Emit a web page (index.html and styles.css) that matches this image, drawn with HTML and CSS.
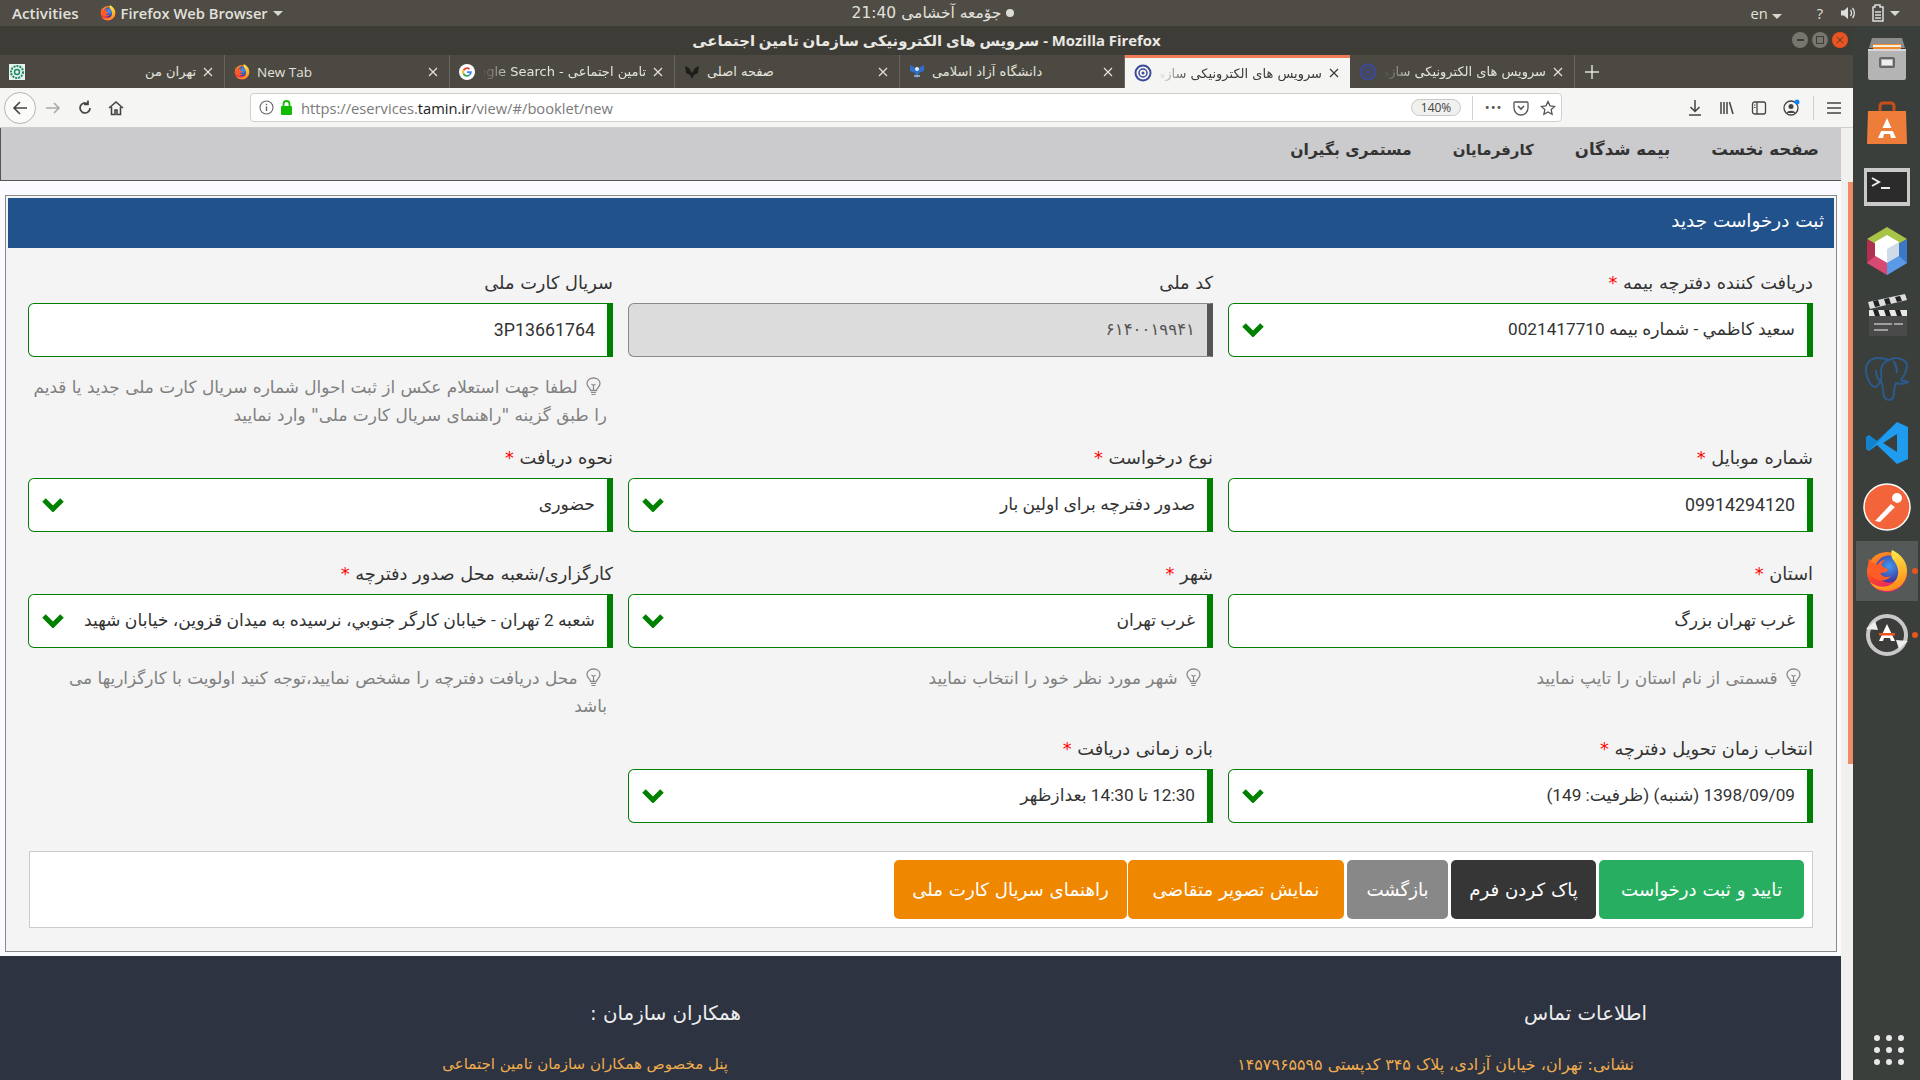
FILE: index.html
```html
<!DOCTYPE html>
<html lang="fa">
<head>
    <meta charset="UTF-8">
    <title>سرویس های الکترونیکی سازمان تامین اجتماعی</title>
    <link rel="stylesheet" href="styles.css">
</head>
<body>

    <svg class="defs" width="0" height="0">
        <defs>
            <linearGradient id="foxOuter" x1="0.2" y1="0" x2="0.7" y2="1">
                <stop offset="0" stop-color="#ff9a1f"/>
                <stop offset="0.55" stop-color="#f5402c"/>
                <stop offset="1" stop-color="#e31587"/>
            </linearGradient>
            <linearGradient id="foxFlame" x1="0.3" y1="0" x2="0.6" y2="1">
                <stop offset="0" stop-color="#fff44f"/>
                <stop offset="1" stop-color="#ff8a16"/>
            </linearGradient>
            <radialGradient id="foxGlobe" cx="0.5" cy="0.4" r="0.6">
                <stop offset="0" stop-color="#3f9bf0"/>
                <stop offset="1" stop-color="#40339a"/>
            </radialGradient>
            <symbol id="firefox" viewBox="0 0 44 44">
                <circle cx="22" cy="23" r="20" fill="url(#foxOuter)"/>
                <circle cx="24" cy="20" r="13.5" fill="url(#foxGlobe)"/>
                <path d="M27 1c9 4 16 12 15 23-1 11-10 18-20 18C14 42 8 38 5 33c6 5 14 6 20 3 6-3 9-9 8-15-1-6-4-9-6-12-1-3-1-6 0-8z" fill="url(#foxFlame)"/>
                <path d="M4 9c2 5 5 6 8 7 2-3 5-5 8-5-3 3-4 4-3 6 2 2 5 2 6 4-2 3-6 3-8 3 2 4 7 5 11 3-3 5-12 6-17 2C4 26 2 17 4 9z" fill="#ff5c27"/>
            </symbol>
            <symbol id="close" viewBox="0 0 10 10">
                <path d="M1 1l8 8M9 1l-8 8" fill="none" stroke="currentColor" stroke-width="1.2"/>
            </symbol>
            <symbol id="chevron" viewBox="0 0 24 16">
                <path d="M3 4l9 9 9-9" fill="none" stroke="#008000" stroke-width="5"/>
            </symbol>
            <symbol id="bulb" viewBox="0 0 15 20">
                <path d="M4.6 13.5C4.4 11 1 9.800 1 6.500 1 3 4 1 7.500 1S14 3 14 6.500c0 3.300-3.400 4.500-3.600 7z" fill="none" stroke="#8a8a8a" stroke-width="1.300"/>
                <path d="M7.500 13V8M5.500 7l2 1.500 2-1.500M5 15.500h5M5.500 17.500h4" fill="none" stroke="#8a8a8a" stroke-width="1.200"/>
            </symbol>
            <symbol id="tamin" viewBox="0 0 18 18">
                <circle cx="9" cy="9" r="7.500" fill="none" stroke="#3c4a9c" stroke-width="2"/>
                <circle cx="9" cy="9" r="4" fill="none" stroke="#3c4a9c" stroke-width="1.500"/>
                <circle cx="9" cy="9" r="1.500" fill="#3c4a9c"/>
            </symbol>
        </defs>
    </svg>

    <!-- gnome top bar -->
    <header class="topbar">
        <div class="topbar-left">
            <span class="activities">Activities</span>
            <span class="app-menu">
                <svg class="fav" width="16" height="16"><use href="#firefox"/></svg>
                Firefox Web Browser
                <i class="caret"></i>
            </span>
        </div>
        <div class="clock"><span dir="rtl">جۆمعه آخشامی 21:40</span> <i class="dot"></i></div>
        <div class="tray">
            <span class="lang">en <i class="caret"></i></span>
            <span class="help">?</span>
            <svg width="16" height="16" viewBox="0 0 16 16"><path d="M1 5.500h3L8 2v12l-4-3.500H1z" fill="#ddd"/><path d="M10.500 5c1.300 1.800 1.300 4.200 0 6M12.500 3c2.300 3 2.300 7 0 10" fill="none" stroke="#ddd" stroke-width="1.300"/></svg>
            <svg class="battery" width="14" height="18" viewBox="0 0 14 18"><path d="M4 1h5v2h3v14H2V3h2z" fill="none" stroke="#ddd" stroke-width="1.500"/><path d="M4 8h6M4 11h6M4 14h6" stroke="#ddd" stroke-width="1.500"/></svg>
            <i class="caret tray-caret"></i>
        </div>
    </header>

    <div class="desktop">
        <div class="window">
            <div class="titlebar">
                <span class="win-title"><span dir="rtl">سرویس های الکترونیکی سازمان تامین اجتماعی</span> - Mozilla Firefox</span>
                <div class="win-btns">
                    <span class="win-btn"><i class="min"></i></span>
                    <span class="win-btn"><i class="max"></i></span>
                    <span class="win-btn win-close"><svg width="8" height="8"><use href="#close"/></svg></span>
                </div>
            </div>

            <div class="tabstrip">
                <div class="tab">
                    <svg class="fav" width="16" height="16" viewBox="0 0 16 16"><rect width="16" height="16" fill="#e8f2ec"/><circle cx="8" cy="8" r="6" fill="none" stroke="#1c8a6a" stroke-width="2" stroke-dasharray="2 1"/><circle cx="8" cy="8" r="2.500" fill="none" stroke="#1c8a6a" stroke-width="1.500"/></svg>
                    <span class="tab-title" dir="rtl">تهران من</span>
                    <svg class="tab-x" width="10" height="10"><use href="#close"/></svg>
                </div>
                <div class="tab">
                    <svg class="fav" width="16" height="16"><use href="#firefox"/></svg>
                    <span class="tab-title tab-ltr">New Tab</span>
                    <svg class="tab-x" width="10" height="10"><use href="#close"/></svg>
                </div>
                <div class="tab">
                    <svg class="fav" width="16" height="16" viewBox="0 0 16 16"><circle cx="8" cy="8" r="8" fill="#fff"/><path d="M8 3.200a4.800 4.800 0 0 1 3.200 1.200l-1.300 1.300A3 3 0 0 0 5.200 7L3.700 5.800A4.800 4.800 0 0 1 8 3.200z" fill="#ea4335"/><path d="M3.700 5.800L5.200 7a3 3 0 0 0 0 2l-1.500 1.200a4.800 4.800 0 0 1 0-4.400z" fill="#fbbc05"/><path d="M3.700 10.200L5.200 9a3 3 0 0 0 4.500 1.500l1.400 1.100A4.800 4.800 0 0 1 3.700 10.200z" fill="#34a853"/><path d="M12.800 8c0 1.500-.6 2.700-1.700 3.600L9.700 10.500c.5-.3.900-.8 1-1.500H8V7.200h4.700c.1.300.1.500.1.800z" fill="#4285f4"/></svg>
                    <span class="tab-title tab-fade" dir="rtl">تامین اجتماعی - Google Search</span>
                    <svg class="tab-x" width="10" height="10"><use href="#close"/></svg>
                </div>
                <div class="tab">
                    <svg class="fav" width="16" height="16" viewBox="0 0 16 16"><path d="M8 15L6 11 2 9 1 2l4 2 3 5 3-5 4-2-1 7-4 2z" fill="#1e1e1c"/></svg>
                    <span class="tab-title tab-start"><span dir="rtl">صفحه اصلی</span></span>
                    <svg class="tab-x" width="10" height="10"><use href="#close"/></svg>
                </div>
                <div class="tab">
                    <svg class="fav" width="16" height="16" viewBox="0 0 16 16"><path d="M8 15L6 9 1 7 1 1l4 2 3 4 3-4 4-2 0 6-5 2z" fill="#2f6fc8"/><circle cx="8" cy="5" r="2" fill="#e4eefb"/><path d="M5 12h6" stroke="#e4eefb"/></svg>
                    <span class="tab-title tab-start"><span dir="rtl">دانشگاه آزاد اسلامی</span></span>
                    <svg class="tab-x" width="10" height="10"><use href="#close"/></svg>
                </div>
                <div class="tab tab-active">
                    <svg class="fav" width="18" height="18"><use href="#tamin"/></svg>
                    <span class="tab-title tab-fade" dir="rtl">سرویس های الکترونیکی سازمان تامین اجتماعی</span>
                    <svg class="tab-x" width="10" height="10"><use href="#close"/></svg>
                </div>
                <div class="tab">
                    <svg class="fav" width="18" height="18"><use href="#tamin"/></svg>
                    <span class="tab-title tab-fade" dir="rtl">سرویس های الکترونیکی سازمان تامین اجتماعی</span>
                    <svg class="tab-x" width="10" height="10"><use href="#close"/></svg>
                </div>
                <svg class="tab-new" width="16" height="16" viewBox="0 0 16 16"><path d="M8 1v14M1 8h14" stroke="#ddd" stroke-width="1.500"/></svg>
            </div>

            <div class="toolbar">
                <span class="back-btn"><svg width="16" height="16" viewBox="0 0 16 16"><path d="M15 8H2M8 2L2 8l6 6" fill="none" stroke="#444" stroke-width="1.600"/></svg></span>
                <svg class="tool-ico tool-fwd" width="16" height="16" viewBox="0 0 16 16"><path d="M1 8h13M9 3l5 5-5 5" fill="none" stroke="#aaa" stroke-width="1.600"/></svg>
                <svg class="tool-ico" width="16" height="16" viewBox="0 0 16 16"><path d="M13 8a5 5 0 1 1-2-4M11 0.500V4.500H7" fill="none" stroke="#444" stroke-width="1.700"/></svg>
                <svg class="tool-ico" width="16" height="16" viewBox="0 0 16 16"><path d="M1 8l7-6 7 6M3.500 7v7.500h3.500V10h2v4.500h3.500V7" fill="none" stroke="#444" stroke-width="1.600"/></svg>
                <div class="urlbar">
                    <svg width="15" height="15" viewBox="0 0 15 15"><circle cx="7.500" cy="7.500" r="6.500" fill="none" stroke="#666" stroke-width="1.100"/><path d="M7.500 6.500v4.500M7.500 3.800v1.500" stroke="#666" stroke-width="1.400"/></svg>
                    <svg class="lock" width="13" height="15" viewBox="0 0 13 15"><rect x="1" y="6" width="11" height="9" rx="1" fill="#12bc00"/><path d="M3.500 6V4a3 3 0 0 1 6 0v2" fill="none" stroke="#12bc00" stroke-width="1.800"/></svg>
                    <span class="url">https://eservices.<b>tamin.ir</b>/view/#/booklet/new</span>
                    <div class="url-tail">
                        <span class="zoom-pill">140%</span>
                        <i class="url-sep"></i>
                        <span class="dots">•••</span>
                        <svg width="16" height="16" viewBox="0 0 16 16"><path d="M2 2h12a1 1 0 0 1 1 1v5a7 7 0 0 1-14 0V3a1 1 0 0 1 1-1z" fill="none" stroke="#555" stroke-width="1.300"/><path d="M5 6l3 3 3-3" fill="none" stroke="#555" stroke-width="1.600"/></svg>
                        <svg width="16" height="16" viewBox="0 0 16 16"><path d="M8 1.500l2 4.300 4.700.6-3.500 3.200.9 4.700L8 12l-4.100 2.300.9-4.700L1.300 6.400 6 5.800z" fill="none" stroke="#555" stroke-width="1.300"/></svg>
                    </div>
                </div>
                <div class="tool-right">
                    <svg width="16" height="18" viewBox="0 0 16 18"><path d="M8 1v11M3.500 8L8 12.500 12.500 8M2 16h12" fill="none" stroke="#444" stroke-width="1.500"/></svg>
                    <svg width="16" height="16" viewBox="0 0 16 16"><path d="M2 2v12M5 2v12M8 2v12M10.500 2l3.500 12" fill="none" stroke="#444" stroke-width="1.500"/></svg>
                    <svg width="16" height="16" viewBox="0 0 16 16"><rect x="1.500" y="2" width="13" height="12" rx="2" fill="none" stroke="#444" stroke-width="1.300"/><path d="M6 2v12" stroke="#444" stroke-width="1.300"/><path d="M3 5h1.500M3 7.500h1.500" stroke="#444"/></svg>
                    <svg width="17" height="17" viewBox="0 0 17 17"><circle cx="8" cy="9" r="7" fill="none" stroke="#444" stroke-width="1.300"/><circle cx="8" cy="7.500" r="2.500" fill="#444"/><path d="M3.500 14c1-3 8-3 9 0" fill="#444"/><circle cx="14" cy="3" r="2.500" fill="#0a84ff"/></svg>
                    <i class="tool-sep"></i>
                    <svg width="14" height="14" viewBox="0 0 14 14"><path d="M0 2h14M0 7h14M0 12h14" stroke="#444" stroke-width="1.500"/></svg>
                </div>
            </div>

            <div class="viewport">
                <div class="page" dir="rtl">
                    <nav class="mainnav">
                        <a href="#">صفحه نخست</a>
                        <a href="#">بیمه شدگان</a>
                        <a href="#" class="nav-narrow">کارفرمایان</a>
                        <a href="#" class="nav-mid">مستمری بگیران</a>
                    </nav>

                    <section class="panel">
                        <h2 class="panel-head">ثبت درخواست جدید</h2>
                        <div class="form-grid">
                            <div class="field">
                                <label>دریافت کننده دفترچه بیمه <em>*</em></label>
                                <div class="control"><span>سعید كاظمي - شماره بیمه 0021417710</span><svg width="24" height="16"><use href="#chevron"/></svg></div>
                            </div>
                            <div class="field">
                                <label>کد ملی</label>
                                <div class="control disabled"><span>۶۱۴۰۰۱۹۹۴۱</span></div>
                            </div>
                            <div class="field">
                                <label>سریال کارت ملی</label>
                                <div class="control"><span class="num">3P13661764</span></div>
                                <p class="hint"><svg width="15" height="20"><use href="#bulb"/></svg> لطفا جهت استعلام عکس از ثبت احوال شماره سریال کارت ملی جدید یا قدیم<br>را طبق گزینه "راهنمای سریال کارت ملی" وارد نمایید</p>
                            </div>

                            <div class="field">
                                <label>شماره موبایل <em>*</em></label>
                                <div class="control"><span class="num">09914294120</span></div>
                            </div>
                            <div class="field">
                                <label>نوع درخواست <em>*</em></label>
                                <div class="control"><span>صدور دفترچه برای اولین بار</span><svg width="24" height="16"><use href="#chevron"/></svg></div>
                            </div>
                            <div class="field">
                                <label>نحوه دریافت <em>*</em></label>
                                <div class="control"><span>حضوری</span><svg width="24" height="16"><use href="#chevron"/></svg></div>
                            </div>

                            <div class="field">
                                <label>استان <em>*</em></label>
                                <div class="control"><span>غرب تهران بزرگ</span></div>
                                <p class="hint"><svg width="15" height="20"><use href="#bulb"/></svg> قسمتی از نام استان را تایپ نمایید</p>
                            </div>
                            <div class="field">
                                <label>شهر <em>*</em></label>
                                <div class="control"><span>غرب تهران</span><svg width="24" height="16"><use href="#chevron"/></svg></div>
                                <p class="hint"><svg width="15" height="20"><use href="#bulb"/></svg> شهر مورد نظر خود را انتخاب نمایید</p>
                            </div>
                            <div class="field">
                                <label>کارگزاری/شعبه محل صدور دفترچه <em>*</em></label>
                                <div class="control"><span>شعبه 2 تهران - خیابان کارگر جنوبي، نرسیده به میدان قزوین، خیابان شهید</span><svg width="24" height="16"><use href="#chevron"/></svg></div>
                                <p class="hint"><svg width="15" height="20"><use href="#bulb"/></svg> محل دریافت دفترچه را مشخص نمایید،توجه کنید اولویت با کارگزاریها می<br>باشد</p>
                            </div>

                            <div class="field">
                                <label>انتخاب زمان تحویل دفترچه <em>*</em></label>
                                <div class="control"><span>1398/09/09 (شنبه) (ظرفیت: 149)</span><svg width="24" height="16"><use href="#chevron"/></svg></div>
                            </div>
                            <div class="field">
                                <label>بازه زمانی دریافت <em>*</em></label>
                                <div class="control"><span>12:30 تا 14:30 بعدازظهر</span><svg width="24" height="16"><use href="#chevron"/></svg></div>
                            </div>
                        </div>

                        <div class="actions">
                            <button class="btn btn-green">تایید و ثبت درخواست</button>
                            <button class="btn btn-dark">پاک کردن فرم</button>
                            <button class="btn btn-gray">بازگشت</button>
                            <button class="btn btn-orange btn-media">نمایش تصویر متقاضی</button>
                            <button class="btn btn-orange btn-guide">راهنمای سریال کارت ملی</button>
                        </div>
                    </section>

                    <footer class="sitefoot">
                        <div class="foot-col foot-contact">
                            <h3>اطلاعات تماس</h3>
                            <p>نشانی: تهران، خیابان آزادی، پلاک ۳۴۵ کدپستی ۱۴۵۷۹۶۵۵۹۵</p>
                        </div>
                        <div class="foot-col foot-partners">
                            <h3>همکاران سازمان :</h3>
                            <p>پنل مخصوص همکاران سازمان تامین اجتماعی</p>
                        </div>
                    </footer>
                </div>
                <div class="scrolltrack"><i class="scrollthumb"></i></div>
            </div>
        </div>

        <aside class="dock">
            <span class="dock-item">
                <svg width="42" height="44" viewBox="0 0 42 44"><path d="M6 1h30l3 10H3z" fill="#8d8d8d"/><rect x="7" y="7" width="28" height="8" fill="#f08a2c"/><rect x="7" y="8" width="28" height="2" fill="#f6efe0"/><rect x="2" y="12" width="38" height="31" rx="2" fill="#b4b4b4"/><rect x="2" y="12" width="38" height="2" fill="#d8d8d8"/><rect x="14" y="21" width="14" height="9" rx="1" fill="none" stroke="#666" stroke-width="2"/><rect x="16" y="23" width="10" height="5" fill="#eee"/></svg>
            </span>
            <span class="dock-item">
                <svg width="42" height="44" viewBox="0 0 42 44"><path d="M14 10V5a3 3 0 0 1 3-3h8a3 3 0 0 1 3 3v5" fill="none" stroke="#c94f1a" stroke-width="3"/><path d="M2 10h38l1 33H1z" fill="#ef7d3a"/><path d="M21 17l9 20h-5l-1-4h-6l-1 4h-5z" fill="#fff"/><rect x="13" y="27" width="16" height="3" fill="#ef7d3a"/></svg>
            </span>
            <span class="dock-item">
                <svg width="46" height="38" viewBox="0 0 46 38"><rect width="46" height="38" fill="#c9c9c9"/><rect x="3" y="4" width="40" height="30" fill="#2b2b2b"/><path d="M8 10l7 4-7 4" fill="none" stroke="#eee" stroke-width="2"/><path d="M17 20h9" stroke="#eee" stroke-width="2"/></svg>
            </span>
            <span class="dock-item">
                <svg width="42" height="48" viewBox="0 0 42 48"><path d="M21 0l20 12-20 12L1 12z" fill="#a8c448"/><path d="M41 12v24L21 48V24z" fill="#3a78c8"/><path d="M1 12v24l20 12V24z" fill="#b03050"/><path d="M21 8l12 7v14l-12 7-12-7V15z" fill="#fff"/><path d="M33 15v14l-12 7V22z" fill="#cfdbe6"/><path d="M41 36L21 48V36l12-7z" fill="#5a9ae6"/><path d="M1 36l20 12V36L9 29z" fill="#d94a72"/></svg>
            </span>
            <span class="dock-item">
                <svg width="40" height="44" viewBox="0 0 40 44"><path d="M1 9L38 1l2 6L3 16z" fill="#ddd"/><path d="M6 8l5-1 2 6-5 1zM17 6l5-1 2 6-5 1zM28 4l5-1 2 5-5 1z" fill="#222"/><rect x="2" y="17" width="38" height="26" rx="1" fill="#4a4a4a"/><rect x="2" y="17" width="38" height="6" fill="#e8e8e8"/><path d="M6 17h5l2 6H8zM17 17h5l2 6h-5zM28 17h5l2 6h-5z" fill="#222"/><path d="M7 31h18M27 31h9M7 37h14" stroke="#bbb" stroke-width="1.300"/></svg>
            </span>
            <span class="dock-item">
                <svg width="46" height="46" viewBox="0 0 46 46"><path d="M14 2C6 2 1 8 2 16c1 7 5 15 9 15 3 0 4-4 6-6 1 3 2 5 2 9 0 6 1 10 6 10 4 0 5-4 5-8 0-3 1-6 2-9 3 1 8 1 12-1-3-2-6 0-7-2 3-4 6-10 6-15C43 6 38 2 32 2c-3 0-5 1-7 2-3-1-7-2-11-2z" fill="none" stroke="#2b5b8c" stroke-width="2"/><path d="M25 4c-5 1-8 6-8 11 0 4 1 6 0 10M33 17c0-5-1-9-4-12M12 14c0 4 1 10 5 11" fill="none" stroke="#2b5b8c" stroke-width="2"/></svg>
            </span>
            <span class="dock-item">
                <svg width="42" height="42" viewBox="0 0 42 42"><path d="M31 0l11 5v32l-11 5L11 23 3 29 0 27V15l3-2 8 6z" fill="#1f9cf0"/><path d="M31 12L17 21l14 9z" fill="#3a3f3c"/><path d="M31 0L3 29 0 27V15l3-2 8 6z" fill="#0a6fb5" opacity=".55"/></svg>
            </span>
            <span class="dock-item">
                <svg width="48" height="48" viewBox="0 0 48 48"><circle cx="24" cy="24" r="23" fill="#f4643a" stroke="#fff" stroke-width="1.500"/><path d="M12 38l16-17 4 3-15 15z" fill="#fff"/><circle cx="34" cy="15" r="5" fill="#fff"/><path d="M28 21l3-3 3 3-2 3z" fill="#f4643a"/></svg>
            </span>
            <span class="dock-item dock-active">
                <svg width="44" height="44"><use href="#firefox"/></svg>
                <i class="run-dot"></i>
            </span>
            <span class="dock-item dock-update">
                <svg width="44" height="44" viewBox="0 0 44 44"><circle cx="22" cy="22" r="19" fill="#3c3c3a" stroke="#c8c8c8" stroke-width="4"/><path d="M1 16l9-8 3 9zM43 28l-9 8-3-9z" fill="#eee"/><path d="M22 11l8 17h-4l-1-3h-6l-1 3h-4z" fill="#fff"/><rect x="14" y="20" width="16" height="2.500" fill="#e95420"/></svg>
                <i class="run-dot"></i>
            </span>
            <span class="app-grid">
                <i></i><i></i><i></i><i></i><i></i><i></i><i></i><i></i><i></i>
            </span>
        </aside>
    </div>

</body>
</html>
```

FILE: styles.css
```css
html, body {
    margin: 0;
    height: 100%;
    overflow: hidden;
}
body {
    width: 1920px;
    height: 1080px;
    font-family: "DejaVu Sans", sans-serif;
    background-color: #f4f4f4;
}
.defs {
    position: absolute;
}

/* top bar */
.topbar {
    height: 26px;
    display: flex;
    align-items: center;
    justify-content: space-between;
    padding: 0 20px 0 12px;
    background-color: #4f4c45;
    color: #e2e1dc;
    font-family: "Open Sans", "DejaVu Sans", sans-serif;
    font-size: 14.7px;
}
.topbar-left {
    width: 614px;
    display: flex;
    gap: 21px;
}
.app-menu {
    display: flex;
    align-items: center;
    gap: 5px;
    font-weight: 600;
}
.activities {
    font-size: 15.2px;
    font-weight: 600;
}
.caret {
    display: inline-block;
    width: 0;
    height: 0;
    border-left: 5px solid transparent;
    border-right: 5px solid transparent;
    border-top: 5px solid #d8d7d2;
}
.clock {
    display: flex;
    align-items: center;
    gap: 5px;
    font-size: 15.5px;
    font-family: "DejaVu Sans", sans-serif;
}
.dot {
    width: 8px;
    height: 8px;
    border-radius: 50%;
    background-color: #dcdbd6;
}
.tray {
    width: 660px;
    display: flex;
    align-items: center;
    justify-content: flex-end;
    gap: 11px;
}
.lang {
    margin-right: 24px;
}
.help {
    margin-right: 6px;
}
.battery {
    margin-left: 4px;
}
.tray-caret {
    margin-left: -6px;
}

.desktop {
    display: flex;
    height: 1054px;
}
.window {
    width: 1853px;
    display: flex;
    flex-direction: column;
}

/* title bar */
.titlebar {
    height: 29px;
    position: relative;
    background-color: #3e3c36;
    color: #e9e8e3;
    text-align: center;
    line-height: 28px;
    font-size: 14.9px;
    font-weight: bold;
    font-family: "Open Sans", "DejaVu Sans", sans-serif;
}
.win-btns {
    position: absolute;
    right: 5px;
    top: 6px;
    display: flex;
    gap: 4px;
}
.win-btn {
    width: 16px;
    height: 16px;
    border-radius: 50%;
    background-color: #77756e;
    display: flex;
    align-items: center;
    justify-content: center;
}
.win-btn i {
    display: block;
    background-color: #3e3c36;
}
.win-btn .min {
    width: 7px;
    height: 2px;
}
.win-btn .max {
    width: 6px;
    height: 6px;
    background: none;
    border: 1px solid #3e3c36;
}
.win-close {
    background-color: #e95420;
    color: #3e3c36;
}

/* tabs */
.tabstrip {
    height: 33px;
    display: flex;
    align-items: stretch;
    background-color: #4b4941;
    color: #e4e3de;
    font-size: 13px;
    border-bottom: 1px solid #33322d;
    margin-bottom: -1px;
}
.tab {
    width: 225px;
    box-sizing: border-box;
    display: flex;
    align-items: center;
    gap: 7px;
    padding: 0 11px 0 9px;
    border-right: 1px solid #67655d;
}
.tab-title {
    flex: 1;
    min-width: 0;
    white-space: nowrap;
    overflow: hidden;
    text-align: right;
}
.tab-ltr {
    text-align: left;
    font-family: "Open Sans", sans-serif;
    font-size: 13.5px;
}
.tab-start {
    text-align: left;
}
.tab-fade {
    -webkit-mask-image: linear-gradient(to right, transparent, #000 30px);
    mask-image: linear-gradient(to right, transparent, #000 30px);
}
.tab-x {
    flex: none;
}
.tab-active {
    background-color: #f5f5f3;
    color: #3a3a38;
    border-top: 3px solid #ee7d55;
    border-right: none;
}
.tab-new {
    align-self: center;
    margin-left: 9px;
}

/* toolbar */
.toolbar {
    height: 39px;
    display: flex;
    align-items: center;
    padding: 0 12px 0 4px;
    gap: 15px;
    background-color: #f5f5f3;
    border-bottom: 1px solid #cfcfcc;
}
.back-btn {
    width: 30px;
    height: 30px;
    margin-right: -4px;
    border: 1px solid #b5b5b2;
    border-radius: 50%;
    background-color: #fbfbfa;
    display: flex;
    align-items: center;
    justify-content: center;
}
.tool-fwd {
    margin: 0 1px 0 -2px;
}
.urlbar {
    width: 1312px;
    height: 29px;
    box-sizing: border-box;
    margin-left: 111px;
    margin-right: 1px;
    display: flex;
    align-items: center;
    gap: 6px;
    padding: 0 5px 0 8px;
    background-color: #fff;
    border: 1px solid #cfcfcc;
    border-radius: 4px;
}
.url {
    flex: 1;
    margin-left: 2px;
    color: #7a7a7a;
    font-family: "Open Sans", sans-serif;
    font-size: 14.7px;
}
.url b {
    color: #222;
    font-weight: normal;
}
.url-tail {
    display: flex;
    align-items: center;
    gap: 11px;
}
.zoom-pill {
    padding: 0 9px;
    line-height: 15px;
    border: 1px solid #c8c8c6;
    border-radius: 9px;
    background-color: #f0f0ee;
    color: #444;
    font-family: "Open Sans", sans-serif;
    font-size: 12px;
}
.url-sep, .tool-sep {
    width: 1px;
    height: 24px;
    background-color: #d0d0ce;
}
.tool-sep {
    margin: 0 -3px;
}
.dots {
    color: #555;
    font-size: 10px;
}
.tool-right {
    flex: 1;
    display: flex;
    justify-content: flex-end;
    align-items: center;
    gap: 16px;
}

/* page */
.viewport {
    flex: 1;
    display: flex;
    min-height: 0;
    overflow: hidden;
    background-color: #fbfbff;
}
.page {
    width: 1841px;
    flex: none;
}
.mainnav {
    height: 52px;
    display: flex;
    align-items: flex-start;
    gap: 41px;
    padding-right: 22px;
    background-color: #cbcbcd;
    border-bottom: 1px solid #555;
    border-left: 1px solid #555;
}
.mainnav a {
    margin-top: 12px;
    color: #333;
    text-decoration: none;
    font-weight: bold;
    font-size: 16.5px;
}
.mainnav .nav-narrow {
    font-size: 15px;
    margin-top: 13px;
}
.mainnav .nav-mid {
    font-size: 15.6px;
    margin-top: 13px;
}
.panel {
    width: 1832px;
    height: 757px;
    box-sizing: border-box;
    margin: 14px 4px 4px 5px;
    padding: 2px;
    background-color: #f4f4f4;
    border: 1px solid #8a8a8a;
}
.panel-head {
    height: 50px;
    margin: 0;
    padding-right: 10px;
    line-height: 46px;
    background-color: #21528c;
    color: #fff;
    font-size: 18.4px;
    font-weight: normal;
}
.form-grid {
    display: grid;
    grid-template-columns: repeat(3, 585px);
    column-gap: 15px;
    row-gap: 2px;
    padding: 24px 21px 0 21px;
}
.field {
    display: flex;
    flex-direction: column;
    padding-bottom: 16px;
}
.field label {
    display: block;
    height: 31px;
    line-height: 22px;
    color: #333;
    font-size: 17.8px;
}
.field label em {
    color: red;
    font-style: normal;
}
.control {
    height: 54px;
    box-sizing: border-box;
    margin-bottom: 13px;
    display: flex;
    align-items: center;
    justify-content: space-between;
    padding: 0 12px 2px 12px;
    background-color: #fff;
    border: 1px solid green;
    border-right-width: 6px;
    border-radius: 6px 0 0 6px;
    color: #333;
    font-size: 17.2px;
    font-family: Roboto, "DejaVu Sans", sans-serif;
}
.control .num {
    font-size: 17.8px;
}
.control.disabled {
    background-color: #dcdcdc;
    border-color: #8a8a8a;
    border-right-color: #555;
    color: #555;
    font-size: 16.6px;
}
.hint {
    margin: 3px 6px 0 0;
    color: #808080;
    font-size: 16.9px;
    line-height: 28px;
    white-space: nowrap;
}
.hint svg {
    vertical-align: -4px;
    margin-right: 6px;
    margin-left: 3px;
}

.actions {
    display: flex;
    gap: 3px;
    height: 77px;
    box-sizing: border-box;
    margin: -1px 21px 0;
    padding: 8px 8px;
    background-color: #fff;
    border: 1px solid #ccc;
}
.btn {
    height: 59px;
    padding: 0;
    border: none;
    border-radius: 5px;
    color: #fff;
    font-family: "DejaVu Sans", sans-serif;
    font-size: 18.2px;
}
.btn-green { width: 205px; background-color: #27ae60; }
.btn-dark { width: 145px; background-color: #363636; }
.btn-gray { width: 101px; background-color: #888; }
.btn-orange { background-color: #ef8700; }
.btn-media { width: 216px; }
.btn-guide { width: 233px; margin-right: -2px; }

/* footer */
.sitefoot {
    height: 124px;
    display: flex;
    background-color: #2d3340;
    padding-right: 194px;
}
.foot-col h3 {
    margin: 46px 0 0;
    color: #eee;
    font-size: 19.8px;
    font-weight: normal;
}
.foot-col p {
    margin: 30px 0 0;
    color: #f0ad4e;
    font-size: 15px;
}
.foot-contact {
    width: 906px;
}
.foot-contact p {
    padding-right: 13px;
    font-size: 15.9px;
}
.foot-partners p {
    padding-right: 13px;
}

.scrolltrack {
    flex: 1;
    padding: 54px 0 0 7px;
    background-color: #f1f0ee;
}
.scrollthumb {
    display: block;
    height: 582px;
    background-color: #ee8a65;
}

/* dock */
.dock {
    width: 67px;
    padding-top: 1px;
    box-sizing: border-box;
    display: flex;
    flex-direction: column;
    align-items: flex-start;
    background-color: #3a3f3c;
}
.dock-item {
    position: relative;
    width: 62px;
    height: 64px;
    flex: none;
    margin-left: 3px;
    display: flex;
    align-items: center;
    justify-content: center;
}
.dock-active {
    background: linear-gradient(#555a58, #555a58) center / 62px 60px no-repeat;
}
.run-dot {
    position: absolute;
    right: 0;
    top: 29px;
    width: 6px;
    height: 6px;
    border-radius: 50%;
    background-color: #e95420;
}
.app-grid {
    margin: auto 0 15px 21px;
    display: grid;
    grid-template-columns: repeat(3, 6px);
    gap: 6px;
}
.app-grid i {
    width: 6px;
    height: 6px;
    border-radius: 50%;
    background-color: #e8e8e8;
}
```
